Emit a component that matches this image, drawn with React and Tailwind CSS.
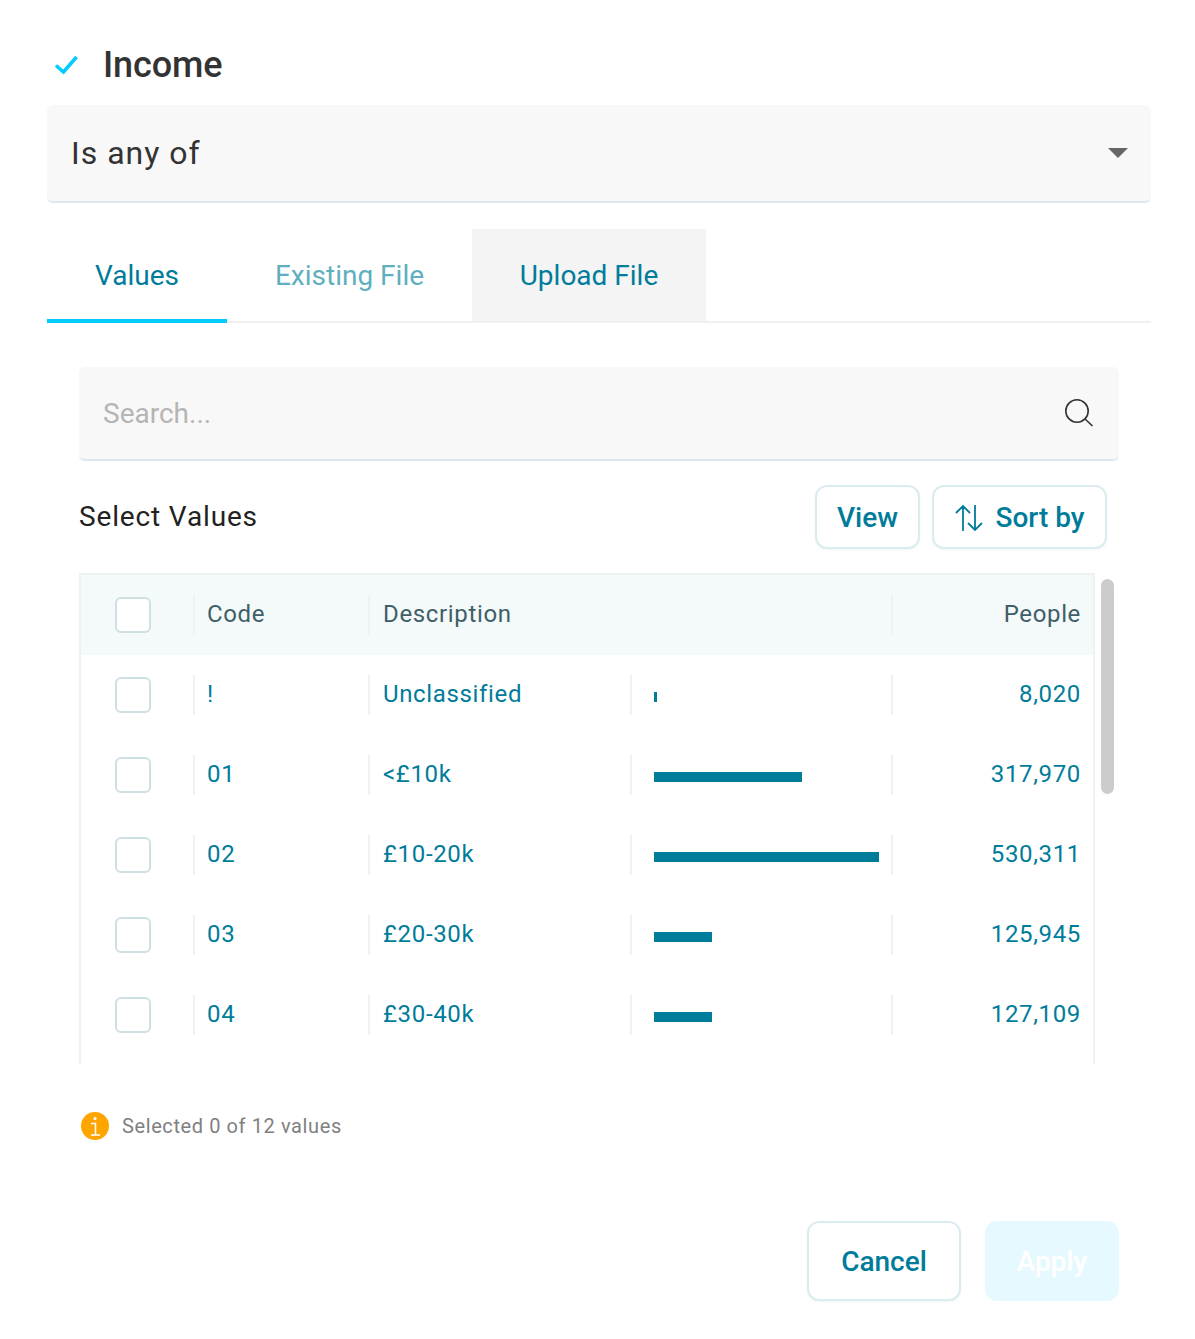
import React from 'react';

const rows = [
  { code: '!', label: 'Unclassified', bar: 3, people: '8,020' },
  { code: '01', label: '<£10k', bar: 148, people: '317,970' },
  { code: '02', label: '£10-20k', bar: 225, people: '530,311' },
  { code: '03', label: '£20-30k', bar: 58, people: '125,945' },
  { code: '04', label: '£30-40k', bar: 58, people: '127,109' },
];

const Box = () => (
  <div className="w-[36px] h-[36px] rounded-[6px] border-2 border-[#cfe0e3] bg-white" />
);

const Sep = () => <div className="w-[2px] h-[40px] bg-[#eef2f2]" />;

export default function App() {
  return (
    <div className="w-[1195px] h-[1339px] bg-white pt-[40px] font-['Roboto',sans-serif] overflow-hidden">
      <div className="flex items-center h-[50px] pl-[54px] gap-[23px]">
        <svg width="26" height="26" viewBox="0 0 26 26" fill="none" stroke="#00ccff" strokeWidth="3.6">
          <path d="M2 13.5L9.5 20L22.5 5" />
        </svg>
        <span className="text-[36px] font-medium text-[#333] tracking-[-0.1px]">Income</span>
      </div>

      <div className="ml-[47px] mr-[44px] mt-[15px] h-[98px] bg-[#f8f8f8] border-b-2 border-[#dce9ec] rounded-[6px] flex items-center justify-between pl-[24px] pr-[23px]">
        <span className="text-[32px] text-[#333] tracking-[1px]">Is any of</span>
        <div className="w-0 h-0 border-l-[10px] border-r-[10px] border-t-[10px] border-l-transparent border-r-transparent border-t-[#666]" />
      </div>

      <div className="ml-[47px] mr-[44px] mt-[26px] flex h-[94px] border-b-2 border-[#f0f0f0] text-[28px]">
        <div className="w-[180px] h-[94px] pt-[4px] flex items-center justify-center text-[#007c9b] border-b-4 border-[#00ccff]">Values</div>
        <div className="w-[245px] pt-[2px] flex items-center justify-center text-[#5fafbf]">Existing File</div>
        <div className="w-[234px] pt-[2px] flex items-center justify-center text-[#007c9b] bg-[#f4f4f4]">Upload File</div>
      </div>

      <div className="mx-[79px] mt-[44px] w-[1040px] h-[94px] bg-[#f8f8f8] border-b-2 border-[#dce9ec] rounded-[6px] flex items-center justify-between pl-[24px] pr-[25px]">
        <span className="text-[28px] text-[#b5b5b5] pt-[2px]">Search...</span>
        <svg width="30" height="30" viewBox="0 0 30 30" fill="none" stroke="#333" strokeWidth="1.6">
          <circle cx="13" cy="13" r="11.2" />
          <path d="M21 21L28.5 28" />
        </svg>
      </div>

      <div className="ml-[79px] mr-[88px] mt-[24px] flex items-center justify-between h-[64px]">
        <span className="text-[28px] text-[#222] tracking-[0.85px]">Select Values</span>
        <div className="flex gap-[12px]">
          <button className="w-[105px] h-[64px] pt-[1px] rounded-[12px] border-2 border-[#dbecf0] shadow-xs text-[28px] font-medium text-[#007c9b]">View</button>
          <button className="w-[175px] h-[64px] pt-[1px] rounded-[12px] border-2 border-[#dbecf0] shadow-xs text-[28px] font-medium text-[#007c9b] flex items-center justify-center gap-[13px]">
            <svg width="28" height="28" viewBox="0 0 28 28" fill="none" stroke="#007c9b" strokeWidth="1.8" className="overflow-visible">
              <path d="M9 27V2M2 9L9 2L16 9" />
              <path d="M21 1V26M14 19L21 26L28 19" />
            </svg>
            Sort by
          </button>
        </div>
      </div>

      <div className="ml-[79px] mr-[81px] mt-[24px] flex">
        <div className="w-[1016px] h-[491px] border-x-2 border-t-2 border-[#eef2f2] overflow-hidden">
          <div className="h-[80px] bg-[#f4f9f9] flex items-center text-[24px] text-[#3e5f68] tracking-[0.65px]">
            <div className="w-[114px] flex items-center justify-between pl-[34px]"><Box /><Sep /></div>
            <div className="w-[175px] flex items-center justify-between pl-[12px]"><span className="pb-[2px]">Code</span><Sep /></div>
            <div className="w-[523px] flex items-center justify-between pl-[13px]"><span className="pb-[2px]">Description</span><Sep /></div>
            <div className="flex-1 text-right pr-[12px] pb-[2px]">People</div>
          </div>
          {rows.map((r) => (
            <div key={r.code} className="h-[80px] flex items-center text-[24px] text-[#007c9b] tracking-[0.65px]">
              <div className="w-[114px] flex items-center justify-between pl-[34px]"><Box /><Sep /></div>
              <div className="w-[175px] flex items-center justify-between pl-[12px]"><span className="pb-[2px]">{r.code}</span><Sep /></div>
              <div className="w-[262px] flex items-center justify-between pl-[13px]"><span className="pb-[2px]">{r.label}</span><Sep /></div>
              <div className="w-[261px] flex items-center justify-between pl-[22px]">
                <div className="h-[10px] mt-[4px] bg-[#007c9b]" style={{ width: r.bar }} />
                <Sep />
              </div>
              <div className="flex-1 text-right pr-[12px] pb-[2px]">{r.people}</div>
            </div>
          ))}
        </div>
        <div className="ml-[6px] mt-[6px] w-[13px] h-[215px] rounded-full bg-[#cccccc]" />
      </div>

      <div className="ml-[81px] mt-[48px] h-[28px] flex items-center gap-[13px]">
        <svg width="28" height="28" viewBox="0 0 28 28">
          <circle cx="14" cy="14" r="14" fill="#ffa500" />
          <circle cx="14" cy="6.5" r="1.6" fill="#fff" />
          <path d="M10 11.5H14.5V23M10 23H19" fill="none" stroke="#fff" strokeWidth="1.5" />
        </svg>
        <span className="text-[20px] text-[#808080] tracking-[0.6px]">Selected 0 of 12 values</span>
      </div>

      <div className="mt-[81px] mr-[76px] flex justify-end gap-[24px]">
        <button className="w-[154px] h-[80px] pt-[2px] rounded-[12px] border-2 border-[#dbecf0] shadow-xs text-[28px] font-medium text-[#007c9b]">Cancel</button>
        <button className="w-[134px] h-[80px] pt-[2px] rounded-[12px] bg-[#e6f9fe] text-[28px] font-medium text-white">Apply</button>
      </div>
    </div>
  );
}
